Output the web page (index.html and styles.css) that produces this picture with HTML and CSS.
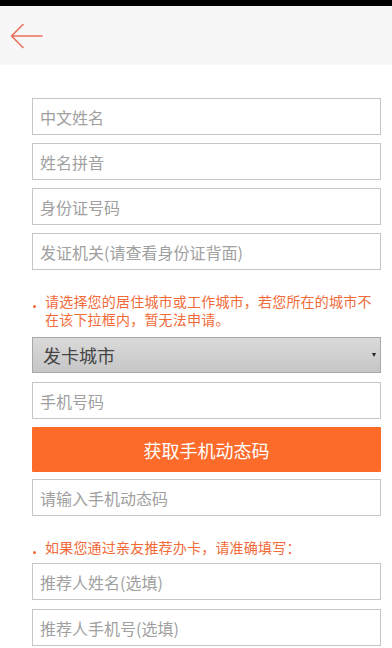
FILE: index.html
```html
<!DOCTYPE html>
<html lang="zh-CN">
<head>
<meta charset="utf-8">
<meta name="viewport" content="width=device-width, initial-scale=1">
<title>申请</title>
<link rel="stylesheet" href="styles.css">
</head>
<body>
<div class="status-bar"></div>
<header class="top-bar">
  <svg class="back" width="34" height="26" viewBox="0 0 34 26" aria-hidden="true">
    <path d="M1.5 13 H32 M13 1.5 L1.5 13 L13 24.5" fill="none" stroke="#ec6f5d" stroke-width="1.6" stroke-linecap="round" stroke-linejoin="round"/>
  </svg>
</header>
<main class="form">
  <input class="field" type="text" placeholder="中文姓名">
  <input class="field" type="text" placeholder="姓名拼音">
  <input class="field" type="text" placeholder="身份证号码">
  <input class="field" type="text" placeholder="发证机关(请查看身份证背面)">
  <div class="note note-city">
    <span class="dot-col"><span class="dot"></span></span>
    <p class="note-text">请选择您的居住城市或工作城市，若您所在的城市不在该下拉框内，暂无法申请。</p>
  </div>
  <div class="select">
    <span class="select-text">发卡城市</span>
    <span class="caret"></span>
  </div>
  <input class="field field-phone" type="text" placeholder="手机号码">
  <button class="btn" type="button">获取手机动态码</button>
  <input class="field field-code" type="text" placeholder="请输入手机动态码">
  <div class="note note-ref">
    <span class="dot-col"><span class="dot"></span></span>
    <p class="note-text">如果您通过亲友推荐办卡，请准确填写：</p>
  </div>
  <input class="field" type="text" placeholder="推荐人姓名(选填)">
  <input class="field field-last" type="text" placeholder="推荐人手机号(选填)">
</main>
</body>
</html>
```
FILE: styles.css
```css
* { box-sizing: border-box; }
html, body { margin: 0; padding: 0; background: #fff; }
body {
  font-family: "Noto Sans CJK SC", "Noto Sans", sans-serif;
  width: 392px;
  overflow: hidden;
}
.status-bar { height: 6px; background: #000; }
.top-bar {
  height: 59px;
  background: #f7f7f7;
  display: flex;
  align-items: center;
  padding-left: 10px;
}
.back { display: block; margin-top: 1px; }
.form {
  display: flex;
  flex-direction: column;
  padding: 33px 11px 0 32px;
}
.field {
  display: block;
  width: 100%;
  height: 37px;
  margin: 0 0 8px 0;
  padding: 0 0 0 7px;
  border: 1px solid #c6c6c6;
  border-radius: 0;
  background: #fff;
  font-family: inherit;
  font-size: 16px;
  color: #333;
  outline: none;
}
.field::placeholder { color: #a0a0a0; }
.note {
  display: flex;
  margin: 14px 0 9px 0;
  color: #f26a38;
  font-size: 14px;
  line-height: 18px;
}
.note-ref { margin: 22px 0 7px 0; }
.dot-col {
  flex: 0 0 13px;
  height: 18px;
  display: flex;
  align-items: flex-end;
  padding-bottom: 2px;
}
.dot {
  display: block;
  width: 3px;
  height: 3px;
  border-radius: 50%;
  background: #f26a38;
  margin-left: 1px;
}
.note-text { margin: 0; letter-spacing: 0.2px; }
.select {
  display: flex;
  align-items: center;
  justify-content: space-between;
  height: 36px;
  margin-bottom: 9px;
  padding: 0 4px 0 10px;
  border: 1px solid #a8a8a8;
  background: linear-gradient(#dadada, #c6c6c6);
}
.select-text { font-size: 18px; color: #454545; }
.caret {
  width: 0; height: 0;
  border-left: 2.5px solid transparent;
  border-right: 2.5px solid transparent;
  border-top: 4px solid #222;
}
.field-phone { margin-bottom: 8px; }
.btn {
  height: 45px;
  margin: 0 0 7px 0;
  border: 0;
  border-radius: 1px;
  background: #fd6b2b;
  color: #fff;
  font-family: inherit;
  font-size: 18px;
}
.field-code { margin-bottom: 0; }
.field-last { margin-top: 1px; }
```
